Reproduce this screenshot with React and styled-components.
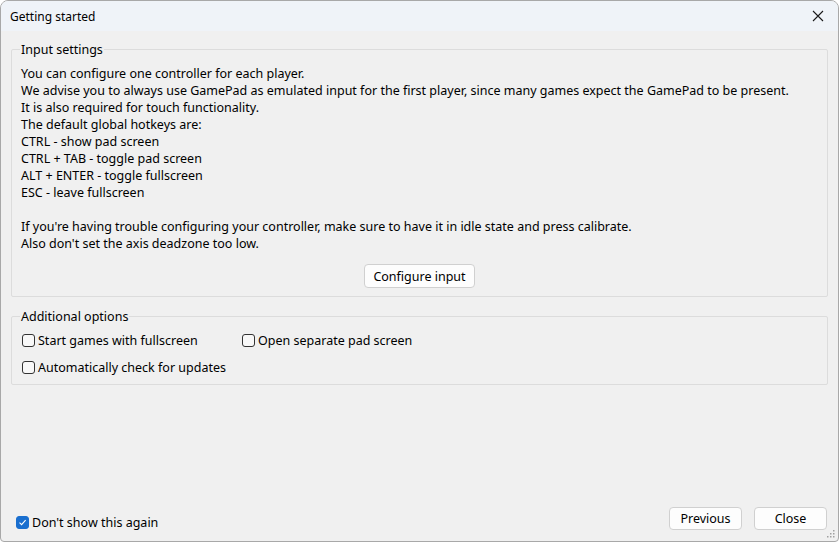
import React from "react";
import styled, { createGlobalStyle } from "styled-components";

const Global = createGlobalStyle`
  html, body { margin: 0; padding: 0; background: #ffffff; }
  body { font-family: "Noto Sans", "Open Sans", sans-serif; font-size: 12.5px; color: #000; }
  * { box-sizing: border-box; }
`;

const Window = styled.div`
  position: relative;
  width: 839px;
  height: 542px;
  border: 1px solid #a8a8a8;
  border-radius: 8px 8px 4px 4px;
  background: #f0f0f0;
  display: flex;
  flex-direction: column;
  overflow: hidden;
`;

const TitleBar = styled.div`
  height: 30px;
  flex: none;
  display: flex;
  align-items: center;
  justify-content: space-between;
  padding: 0 0 0 9px;
  background: #eff3f8;
  font-size: 12px;
`;

const CloseBtn = styled.div`
  width: 46px;
  height: 30px;
  display: flex;
  align-items: center;
  justify-content: center;
  padding-left: 6px;
`;

const Body = styled.div`
  flex: 1;
  display: flex;
  flex-direction: column;
  padding: 10px 10px 10px 10px;
`;

const Group = styled.fieldset`
  margin: 0 0 ${(p) => p.$mb ?? 11}px 0;
  border: 1px solid #dcdcdc;
  border-radius: 2px;
  padding: 7px 9px 8px 9px;
  min-width: 0;
`;

const Legend = styled.legend`
  padding: 0 1px;
  line-height: 17px;
  margin-left: -1px;
`;

const Text = styled.div`
  line-height: 17px;
  white-space: pre;
`;

const Center = styled.div`
  display: flex;
  justify-content: center;
  margin-top: 12px;
`;

const Button = styled.button`
  font: inherit;
  font-size: 12.5px;
  color: #000;
  height: ${(p) => p.$h || 24}px;
  width: ${(p) => (p.$w ? p.$w + "px" : "auto")};
  padding: 0 8px;
  background: #fdfdfd;
  border: 1px solid #d0d0d0;
  border-radius: 4px;
  display: flex;
  align-items: center;
  justify-content: center;
`;

const CheckGrid = styled.div`
  display: grid;
  grid-template-columns: 220px auto;
  row-gap: 10px;
  padding-left: 1px;
`;

const CheckRow = styled.label`
  display: flex;
  align-items: center;
  gap: 3px;
  line-height: 17px;
  height: 17px;
  margin-top: ${(p) => p.$mt || 0}px;
`;

const Box = styled.span`
  width: 13px;
  height: 13px;
  border-radius: 3px;
  border: 1px solid ${(p) => (p.$checked ? "#1a6fcf" : "#333")};
  background: ${(p) => (p.$checked ? "#1a6fcf" : "#f8f8f8")};
  display: flex;
  align-items: center;
  justify-content: center;
  flex: none;
`;

const Spacer = styled.div`
  flex: 1;
`;

const Footer = styled.div`
  display: flex;
  align-items: center;
  padding-left: 5px;
  padding-right: 1px;
`;

const FooterButtons = styled.div`
  margin-left: auto;
  display: flex;
  gap: 12px;
`;

const Grip = styled.svg`
  position: absolute;
  right: 2px;
  bottom: 2px;
`;

function Check({ checked, mt, children }) {
  return (
    <CheckRow $mt={mt}>
      <Box $checked={checked}>
        {checked && (
          <svg width="9" height="9" viewBox="0 0 9 9">
            <path d="M1.5 4.6 L3.6 6.6 L7.6 2.2" fill="none" stroke="#fff" strokeWidth="1.1" />
          </svg>
        )}
      </Box>
      <span>{children}</span>
    </CheckRow>
  );
}

const lines = [
  "You can configure one controller for each player.",
  "We advise you to always use GamePad as emulated input for the first player, since many games expect the GamePad to be present.",
  "It is also required for touch functionality.",
  "The default global hotkeys are:",
  "CTRL - show pad screen",
  "CTRL + TAB - toggle pad screen",
  "ALT + ENTER - toggle fullscreen",
  "ESC - leave fullscreen",
  " ",
  "If you're having trouble configuring your controller, make sure to have it in idle state and press calibrate.",
  "Also don't set the axis deadzone too low.",
];

export default function App() {
  return (
    <Window>
      <Global />
      <TitleBar>
        <span>Getting started</span>
        <CloseBtn>
          <svg width="12" height="12" viewBox="0 0 12 12">
            <path d="M1 1 L11 11 M11 1 L1 11" stroke="#1a1a1a" strokeWidth="1.1" />
          </svg>
        </CloseBtn>
      </TitleBar>
      <Body>
        <Group $mb={11}>
          <Legend>Input settings</Legend>
          {lines.map((l, i) => (
            <Text key={i}>{l}</Text>
          ))}
          <Center>
            <Button>Configure input</Button>
          </Center>
        </Group>
        <Group>
          <Legend>Additional options</Legend>
          <CheckGrid>
            <Check>Start games with fullscreen</Check>
            <Check>Open separate pad screen</Check>
            <Check>Automatically check for updates</Check>
          </CheckGrid>
        </Group>
        <Spacer />
        <Footer>
          <Check checked mt={9}>Don't show this again</Check>
          <FooterButtons>
            <Button $w={73} $h={23}>Previous</Button>
            <Button $w={73} $h={23}>Close</Button>
          </FooterButtons>
        </Footer>
      </Body>
      <Grip width="10" height="10" viewBox="0 0 10 10">
        <g fill="#a0a0a0">
          <rect x="7" y="1" width="1.5" height="1.5" />
          <rect x="4" y="4" width="1.5" height="1.5" />
          <rect x="7" y="4" width="1.5" height="1.5" />
          <rect x="1" y="7" width="1.5" height="1.5" />
          <rect x="4" y="7" width="1.5" height="1.5" />
          <rect x="7" y="7" width="1.5" height="1.5" />
        </g>
      </Grip>
    </Window>
  );
}
